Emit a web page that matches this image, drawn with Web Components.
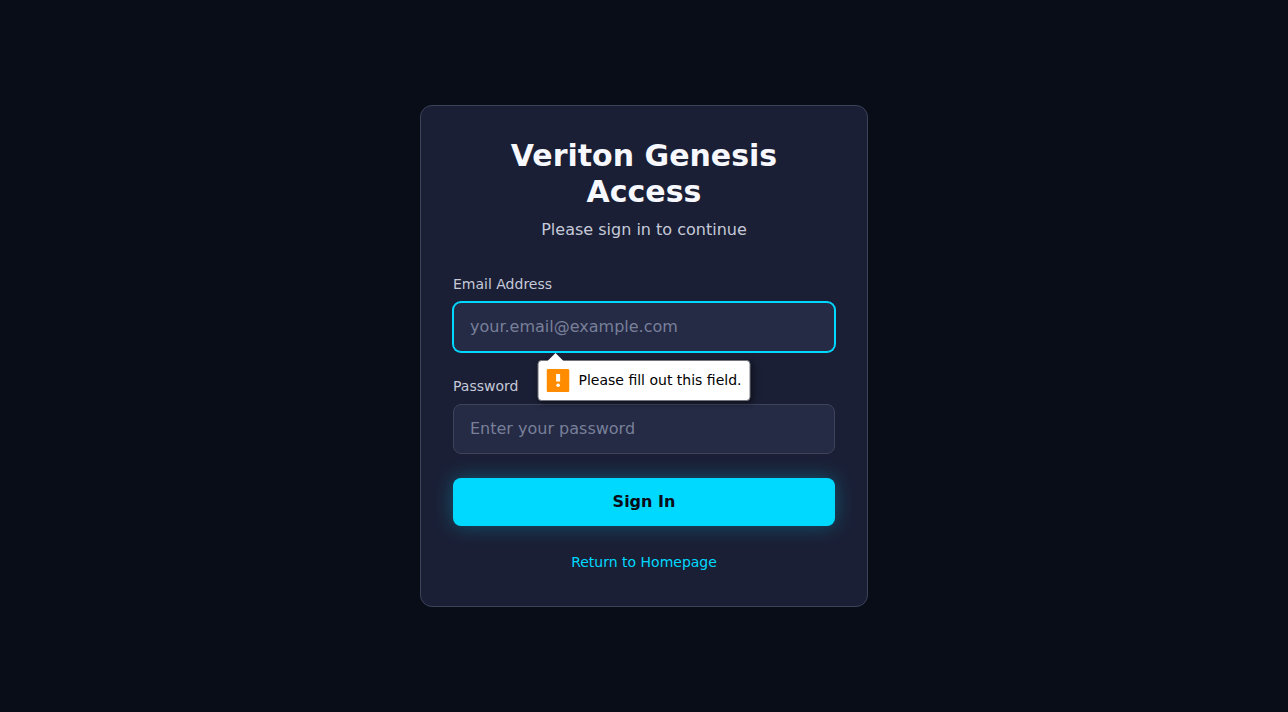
<!DOCTYPE html>
<html lang="en">
<head>
<meta charset="utf-8">
<meta name="viewport" content="width=device-width, initial-scale=1">
<title>Veriton Genesis Access</title>
<style>
  :root {
    --page: #080d18;
    --card: #1a1f35;
    --field: #252a45;
    --line: #3e4359;
    --accent: #00d9ff;
    --text: #f6f8fd;
    --muted: #c5c9d8;
    --hint: #788099;
  }
  body {
    margin: 0;
    background: var(--page);
    color: var(--text);
    font: 16px/24px "DejaVu Sans", sans-serif;
  }
</style>
</head>
<body>
<login-page>
  <login-card heading="Veriton Genesis Access" subtitle="Please sign in to continue">
    <login-form></login-form>
    <nav-link slot="footer" href="#home">Return to Homepage</nav-link>
  </login-card>
</login-page>

<script>
  const define = (name, html, setup) => {
    const template = document.createElement('template');
    template.innerHTML = '<style>*{box-sizing:border-box}</style>' + html;
    customElements.define(name, class extends HTMLElement {
      constructor() {
        super();
        this.attachShadow({ mode: 'open' }).append(template.content.cloneNode(true));
      }
      connectedCallback() {
        if (setup) setup(this, this.shadowRoot);
      }
    });
  };

  define('login-page', `
    <style>
      :host { display: block; }
      main { min-height: 100vh; display: grid; grid-template-columns: minmax(0, 448px); place-content: center; }
    </style>
    <main><slot></slot></main>`);

  define('login-card', `
    <style>
      :host { display: block; }
      section { padding: 32px; border: 1px solid var(--line); border-radius: 12px; background: var(--card); }
      header { text-align: center; margin-bottom: 32px; }
      h1 { margin: 0 0 8px; font-size: 30px; line-height: 36px; font-weight: 700; }
      p { margin: 0; color: var(--muted); }
      footer { margin-top: 24px; text-align: center; }
    </style>
    <section>
      <header><h1></h1><p></p></header>
      <slot></slot>
      <footer><slot name="footer"></slot></footer>
    </section>`, (host, root) => {
    root.querySelector('h1').textContent = host.getAttribute('heading');
    root.querySelector('p').textContent = host.getAttribute('subtitle');
  });

  define('text-field', `
    <style>
      :host { display: block; position: relative; }
      label { display: block; margin-bottom: 8px; font-size: 14px; line-height: 20px; color: var(--muted); }
      input {
        display: block; width: 100%; margin: 0; padding: 12px 16px;
        border: 1px solid var(--line); border-radius: 8px; outline: none;
        background: var(--field); color: var(--text); font: inherit; line-height: 24px;
      }
      input::placeholder { color: var(--hint); opacity: 1; }
      :host([active]) input, input:focus { border-color: var(--accent); box-shadow: 0 0 0 1px var(--accent); }
    </style>
    <label for="control"></label>
    <input id="control" required>
    <slot></slot>`, (host, root) => {
    const input = root.querySelector('input');
    root.querySelector('label').textContent = host.getAttribute('label');
    input.type = host.getAttribute('type');
    input.placeholder = host.getAttribute('placeholder');
  });

  define('field-alert', `
    <style>
      :host { position: absolute; z-index: 1; top: 100%; left: 50%; transform: translateX(-50%); margin-top: 8px; }
      div {
        display: flex; align-items: flex-start; gap: 9px; padding: 8px;
        border: 1px solid #74747c; border-radius: 4px; background: #fff; color: #000;
        box-shadow: 2px 2px 6px rgba(0, 0, 0, .5);
        font-size: 14px; line-height: 22px; white-space: nowrap;
      }
      svg { display: block; flex: none; }
      .tip { position: absolute; left: 10px; bottom: 100%; margin-bottom: -1px; }
    </style>
    <div role="alert">
      <svg class="tip" width="16" height="8" viewBox="0 0 16 8" aria-hidden="true"><path d="M0 8 8 0l8 8z" fill="#fff"/></svg>
      <svg width="23" height="23" viewBox="0 0 23 23" aria-hidden="true">
        <rect width="23" height="23" rx="1.5" fill="#ff8c00"/>
        <path d="M9.6 5h4v7.5h-4z" fill="#fff"/><circle cx="11.6" cy="16.2" r="1.8" fill="#fff"/>
      </svg>
      <span><slot></slot></span>
    </div>`);

  define('primary-button', `
    <style>
      :host { display: block; }
      button {
        display: block; width: 100%; padding: 12px 16px; border: 0; border-radius: 8px;
        background: var(--accent); color: var(--page); font: inherit; font-weight: 700; cursor: pointer;
        box-shadow: 0 0 20px rgba(0, 217, 255, .3);
      }
    </style>
    <button type="button"><slot></slot></button>`);

  define('nav-link', `
    <style>
      :host { display: block; }
      a { font-size: 14px; color: var(--accent); text-decoration: none; }
      a:hover { text-decoration: underline; }
    </style>
    <a><slot></slot></a>`, (host, root) => {
    root.querySelector('a').href = host.getAttribute('href');
  });

  define('login-form', `
    <style>
      :host { display: block; }
      form { display: grid; gap: 24px; }
    </style>
    <form novalidate>
      <text-field active label="Email Address" type="email" placeholder="your.email@example.com">
        <field-alert>Please fill out this field.</field-alert>
      </text-field>
      <text-field label="Password" type="password" placeholder="Enter your password"></text-field>
      <primary-button>Sign In</primary-button>
    </form>`);
</script>
</body>
</html>
